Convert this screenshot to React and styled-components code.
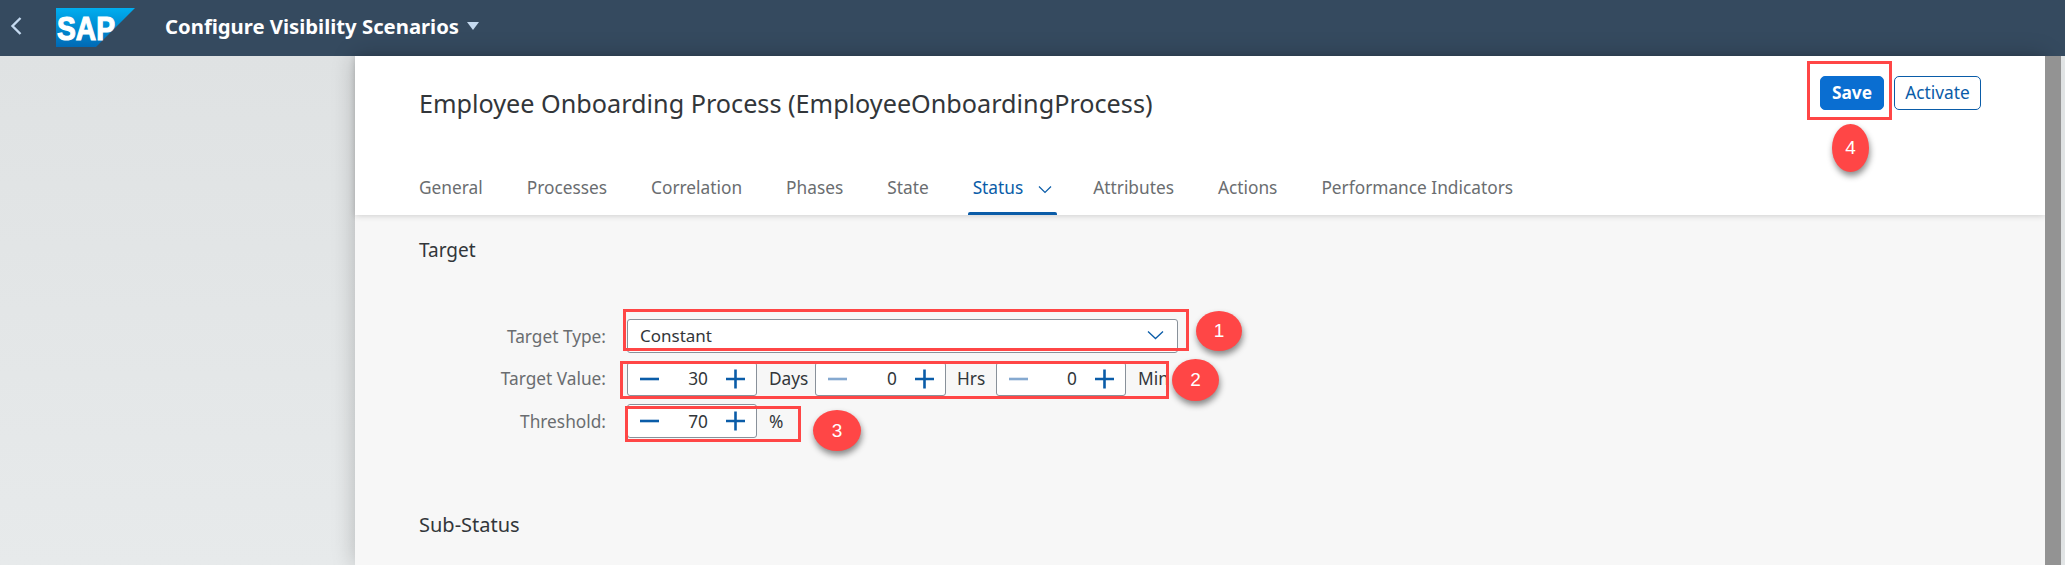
import styled, { createGlobalStyle } from "styled-components";

const GlobalStyle = createGlobalStyle`
  html, body {
    margin: 0;
    padding: 0;
    height: 565px;
    overflow: hidden;
    background: #e3e6e7;
    font-family: "Noto Sans", "Open Sans", sans-serif;
  }
`;

const Page = styled.div`
  position: relative;
  width: 2065px;
  height: 565px;
  display: flex;
  flex-direction: column;
  overflow: hidden;
`;

const ShellBar = styled.header`
  height: 56px;
  flex: none;
  background: #354a5f;
  display: flex;
  align-items: center;
  padding-left: 10px;
`;

const BackIcon = styled.svg`
  width: 12px;
  height: 18px;
  margin-bottom: 4px;
`;

const Logo = styled.svg`
  width: 79px;
  height: 39px;
  margin-left: 34px;
  margin-bottom: 1px;
`;

const AppTitle = styled.div`
  margin-left: 30px;
  margin-bottom: 5px;
  font-size: 20.3px;
  font-weight: 700;
  color: #fff;
  display: flex;
  align-items: center;
  gap: 8px;
`;

const TitleCaret = styled.span`
  width: 0;
  height: 0;
  border-left: 6.5px solid transparent;
  border-right: 6.5px solid transparent;
  border-top: 8px solid #c5daf0;
`;

const Body = styled.div`
  flex: 1;
  display: flex;
  min-height: 0;
`;

const Gutter = styled.div`
  width: 355px;
  flex: none;
  background: linear-gradient(180deg, #dfe2e3, #e7eaeb);
`;

const Panel = styled.main`
  width: 1690px;
  flex: none;
  display: flex;
  flex-direction: column;
  background: #f7f7f7;
  box-shadow: 0 0 22px rgba(0, 0, 0, 0.22);
  position: relative;
`;

const ScrollTrack = styled.div`
  width: 16px;
  flex: none;
  background: #939393;
  position: relative;
`;

const PanelHead = styled.div`
  height: 159px;
  flex: none;
  background: #fff;
  box-shadow: 0 1px 6px rgba(0, 0, 0, 0.16);
  padding: 0 64px;
  box-sizing: border-box;
  display: flex;
  flex-direction: column;
`;

const TitleRow = styled.div`
  height: 112px;
  flex: none;
  display: flex;
  justify-content: space-between;
  padding-top: 20px;
  box-sizing: border-box;
`;

const PageTitle = styled.h1`
  margin: 11px 0 0;
  font-size: 25.2px;
  line-height: 32px;
  font-weight: 400;
  color: #32363a;
`;

const Actions = styled.div`
  display: flex;
  gap: 10px;
`;

const ActionButton = styled.button`
  height: 34px;
  box-sizing: border-box;
  border-radius: 5px;
  font-family: inherit;
  font-size: 17.3px;
  padding: 0 0 2px;
  width: ${(p) => (p.$primary ? "64px" : "87px")};
  background: ${(p) => (p.$primary ? "#0a6ed1" : "#fff")};
  color: ${(p) => (p.$primary ? "#fff" : "#0a5ca8")};
  border: 1px solid ${(p) => (p.$primary ? "#0a6ed1" : "#0a5ca8")};
  font-weight: ${(p) => (p.$primary ? 700 : 400)};
`;

const TabBar = styled.nav`
  display: flex;
  gap: 44px;
  height: 47px;
`;

const Tab = styled.div`
  position: relative;
  height: 47px;
  font-size: 17.3px;
  line-height: 39px;
  color: ${(p) => (p.$active ? "#0a5ca8" : "#6a6d70")};
  display: flex;
  gap: 15px;
  align-items: flex-start;

  ${(p) =>
    p.$active &&
    `
    margin-right: -3px;

    &::after {
      content: "";
      position: absolute;
      left: -5px;
      right: -5px;
      bottom: 0;
      height: 3px;
      background: #0a5ca8;
      border-radius: 2px 2px 0 0;
    }
  `}
`;

const TabChevron = styled.svg`
  width: 14px;
  height: 9px;
  margin-top: 17px;
`;

const Content = styled.section`
  padding: 23px 0 0 64px;
`;

const SectionTitle = styled.h2`
  margin: 0;
  font-size: 19px;
  line-height: 24px;
  font-weight: 400;
  color: #32363a;
`;

const Form = styled.div`
  margin-top: 57px;
  display: grid;
  grid-template-columns: 187px auto;
  grid-auto-rows: 34px;
  column-gap: 21px;
  row-gap: 8.5px;
  justify-content: start;
  align-items: center;
`;

const Label = styled.label`
  text-align: right;
  font-size: 17.3px;
  color: #6a6d70;
`;

const Select = styled.div`
  width: 551px;
  height: 34px;
  box-sizing: border-box;
  background: #fff;
  border: 1px solid #89919a;
  border-radius: 3px;
  display: flex;
  align-items: center;
  justify-content: space-between;
  padding: 0 13px 2px 12px;
  font-size: 17px;
  color: #32363a;
`;

const StepRow = styled.div`
  display: flex;
  align-items: center;
`;

const StepperBox = styled.div`
  width: ${(p) => p.$width || 130}px;
  height: 34px;
  box-sizing: border-box;
  background: #fff;
  border: 1px solid #89919a;
  border-radius: 3px;
  display: flex;
  align-items: center;
  justify-content: space-between;
  font-size: 17.3px;
  color: #32363a;
`;

const StepIcon = styled.svg`
  width: 44px;
  height: 20px;
  flex: none;
`;

const StepValue = styled.span`
  flex: 1;
  text-align: right;
  padding-right: 4px;
`;

const Unit = styled.span`
  width: ${(p) => p.$width}px;
  box-sizing: border-box;
  padding-left: ${(p) => p.$pad || 12}px;
  font-size: 17.3px;
  color: #32363a;
  white-space: nowrap;
`;

const SubTitle = styled(SectionTitle)`
  margin-top: 75px;
  font-size: 20px;
`;

const Highlight = styled.div`
  position: absolute;
  box-sizing: border-box;
  border: 3px solid #ff4646;
  left: ${(p) => p.$x}px;
  top: ${(p) => p.$y}px;
  width: ${(p) => p.$w}px;
  height: ${(p) => p.$h}px;
  pointer-events: none;
`;

const Badge = styled.div`
  position: absolute;
  left: ${(p) => p.$x}px;
  top: ${(p) => p.$y}px;
  width: ${(p) => p.$w}px;
  height: ${(p) => p.$h}px;
  border-radius: 50%;
  background: #ff4646;
  color: #fff;
  font-family: "Liberation Sans", sans-serif;
  font-size: 19px;
  display: flex;
  align-items: center;
  justify-content: center;
  box-shadow: 1px 4px 6px rgba(0, 0, 0, 0.45);
`;

function Stepper({ value, minusOff, width }) {
  return (
    <StepperBox $width={width}>
      <StepIcon viewBox="0 0 44 20">
        <path d="M12 10h19" stroke={minusOff ? "#85a9d0" : "#0a5ca8"} strokeWidth="2.6" />
      </StepIcon>
      <StepValue>{value}</StepValue>
      <StepIcon viewBox="0 0 44 20">
        <path d="M14 10h19M23.500 .5v19" stroke="#0a5ca8" strokeWidth="2.6" />
      </StepIcon>
    </StepperBox>
  );
}

const tabs = ["General", "Processes", "Correlation", "Phases", "State", "Status", "Attributes", "Actions", "Performance Indicators"];

const highlights = [
  { x: 623, y: 309, w: 566, h: 42 },
  { x: 620, y: 361, w: 549, h: 38 },
  { x: 625, y: 406, w: 176, h: 36 },
  { x: 1807, y: 61, w: 85, h: 59 },
];

const badges = [
  { n: 1, x: 1196, y: 311, w: 46, h: 40 },
  { n: 2, x: 1172, y: 359, w: 47, h: 42 },
  { n: 3, x: 813, y: 410, w: 48, h: 41 },
  { n: 4, x: 1832, y: 124, w: 37, h: 48 },
];

export default function App() {
  return (
    <Page>
      <GlobalStyle />
      <ShellBar>
        <BackIcon viewBox="0 0 12 18">
          <path d="M10.500 1 2.500 9l8 8" fill="none" stroke="#c5daf0" strokeWidth="2.400" />
        </BackIcon>
        <Logo viewBox="0 0 79 39">
          <defs>
            <linearGradient id="sapBlue" x1="0" y1="0" x2="0" y2="1">
              <stop offset="0" stopColor="#00aeef" />
              <stop offset="1" stopColor="#0069b5" />
            </linearGradient>
          </defs>
          <polygon points="0,0 79,0 40,39 0,39" fill="url(#sapBlue)" />
          <text x="1" y="32" fontFamily="Liberation Sans, sans-serif" fontWeight="700" fontSize="33" textLength="58" lengthAdjust="spacingAndGlyphs" fill="#fff" stroke="#fff" strokeWidth="1.200">
            SAP
          </text>
        </Logo>
        <AppTitle>
          Configure Visibility Scenarios
          <TitleCaret />
        </AppTitle>
      </ShellBar>
      <Body>
        <Gutter />
        <Panel>
          <PanelHead>
            <TitleRow>
              <PageTitle>Employee Onboarding Process (EmployeeOnboardingProcess)</PageTitle>
              <Actions>
                <ActionButton $primary>Save</ActionButton>
                <ActionButton>Activate</ActionButton>
              </Actions>
            </TitleRow>
            <TabBar>
              {tabs.map((tab) => (
                <Tab key={tab} $active={tab === "Status"}>
                  {tab}
                  {tab === "Status" && (
                    <TabChevron viewBox="0 0 14 9">
                      <path d="M1 1.500 7 7.500l6-6" fill="none" stroke="#0a5ca8" strokeWidth="1.200" />
                    </TabChevron>
                  )}
                </Tab>
              ))}
            </TabBar>
          </PanelHead>
          <Content>
            <SectionTitle>Target</SectionTitle>
            <Form>
              <Label>Target Type:</Label>
              <Select>
                Constant
                <svg width="17" height="10" viewBox="0 0 17 10">
                  <path d="M1 1.500 8.500 8.500 16 1.500" fill="none" stroke="#0a5ca8" strokeWidth="1.300" />
                </svg>
              </Select>
              <Label>Target Value:</Label>
              <StepRow>
                <Stepper value="30" />
                <Unit $width={58}>Days</Unit>
                <Stepper value="0" minusOff width={131} />
                <Unit $width={50} $pad={11}>Hrs</Unit>
                <Stepper value="0" minusOff />
                <Unit $width={40}>Min</Unit>
              </StepRow>
              <Label>Threshold:</Label>
              <StepRow>
                <Stepper value="70" />
                <Unit $width={40}>%</Unit>
              </StepRow>
            </Form>
            <SubTitle>Sub-Status</SubTitle>
          </Content>
        </Panel>
        <ScrollTrack />
      </Body>
      {highlights.map((h) => (
        <Highlight key={h.x} $x={h.x} $y={h.y} $w={h.w} $h={h.h} />
      ))}
      {badges.map((b) => (
        <Badge key={b.n} $x={b.x} $y={b.y} $w={b.w} $h={b.h}>
          {b.n}
        </Badge>
      ))}
    </Page>
  );
}
